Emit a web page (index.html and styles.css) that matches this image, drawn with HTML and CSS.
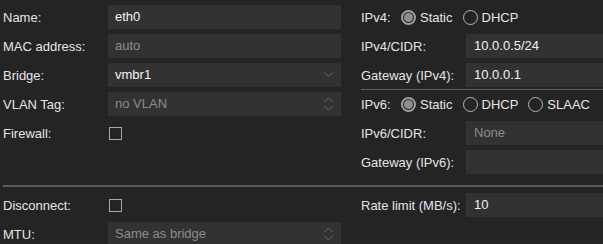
FILE: index.html
```html
<!DOCTYPE html>
<html lang="en">
<head>
    <meta charset="UTF-8">
    <meta name="viewport" content="width=device-width, initial-scale=1.0">
    <title>Network Device</title>
    <link rel="stylesheet" href="styles.css">
</head>
<body>
    <div class="panel">
        <div class="columns">
            <div class="col">
                <div class="row">
                    <div class="label">Name:</div>
                    <div class="field">eth0</div>
                </div>
                <div class="row">
                    <div class="label">MAC address:</div>
                    <div class="field empty">auto</div>
                </div>
                <div class="row">
                    <div class="label">Bridge:</div>
                    <div class="field combo">vmbr1
                        <svg class="trigger" width="9" height="6" viewBox="0 0 9 6"><path d="M0.5 0.5 L4.5 4.5 L8.5 0.5" fill="none" stroke="#6a6a6a" stroke-width="1"/></svg>
                    </div>
                </div>
                <div class="row">
                    <div class="label">VLAN Tag:</div>
                    <div class="field combo empty">no VLAN
                        <svg class="trigger" width="9" height="14" viewBox="0 0 9 14"><path d="M0.5 5 L4.5 1 L8.5 5 M0.5 9 L4.5 13 L8.5 9" fill="none" stroke="#6a6a6a" stroke-width="1"/></svg>
                    </div>
                </div>
                <div class="row">
                    <div class="label">Firewall:</div>
                    <div class="checkbox"></div>
                </div>
            </div>
            <div class="col col-right">
                <div class="row">
                    <div class="label short">IPv4:</div>
                    <div class="radio-item"><span class="radio checked"></span>Static</div>
                    <div class="radio-item"><span class="radio"></span>DHCP</div>
                </div>
                <div class="row">
                    <div class="label">IPv4/CIDR:</div>
                    <div class="field wide">10.0.0.5/24</div>
                </div>
                <div class="row">
                    <div class="label">Gateway (IPv4):</div>
                    <div class="field wide">10.0.0.1</div>
                </div>
                <div class="sep"></div>
                <div class="row">
                    <div class="label short">IPv6:</div>
                    <div class="radio-item"><span class="radio checked"></span>Static</div>
                    <div class="radio-item"><span class="radio"></span>DHCP</div>
                    <div class="radio-item"><span class="radio"></span>SLAAC</div>
                </div>
                <div class="row">
                    <div class="label">IPv6/CIDR:</div>
                    <div class="field wide empty">None</div>
                </div>
                <div class="row">
                    <div class="label">Gateway (IPv6):</div>
                    <div class="field wide"></div>
                </div>
            </div>
        </div>
        <div class="divider"></div>
        <div class="columns">
            <div class="col">
                <div class="row">
                    <div class="label">Disconnect:</div>
                    <div class="checkbox"></div>
                </div>
                <div class="row">
                    <div class="label">MTU:</div>
                    <div class="field combo empty">Same as bridge
                        <svg class="trigger" width="9" height="14" viewBox="0 0 9 14"><path d="M0.5 5 L4.5 1 L8.5 5 M0.5 9 L4.5 13 L8.5 9" fill="none" stroke="#6a6a6a" stroke-width="1"/></svg>
                    </div>
                </div>
            </div>
            <div class="col col-right">
                <div class="row">
                    <div class="label">Rate limit (MB/s):</div>
                    <div class="field wide">10</div>
                </div>
            </div>
        </div>
    </div>
</body>
</html>
```

FILE: styles.css
```css
*{
    margin: 0;
    padding: 0;
    box-sizing: border-box;
}
body{
    background: #242424;
    color: #e4e4e4;
    font-family: "Liberation Sans", Arial, sans-serif;
    font-size: 13px;
    overflow: hidden;
    width: 603px;
    height: 244px;
}
.panel{
    padding: 5px 0 0 3px;
    width: 603px;
    height: 244px;
    overflow: hidden;
}
.columns{
    display: flex;
    gap: 20px;
}
.col{
    width: 338px;
    flex-shrink: 0;
}
.col-right{
    width: 242px;
}
.row{
    display: flex;
    align-items: center;
    height: 24px;
    margin-bottom: 5px;
}
.label{
    width: 105px;
    flex-shrink: 0;
    white-space: nowrap;
}
.label.short{
    width: 40px;
}
.field{
    width: 233px;
    height: 24px;
    background: #323232;
    color: #f2f2f2;
    padding-left: 7px;
    line-height: 24px;
    position: relative;
}
.field.wide{
    width: 137px;
    padding-left: 8px;
}
.field.empty{
    color: #8c8c8c;
}
.trigger{
    position: absolute;
    right: 8px;
    top: 50%;
    transform: translateY(-50%);
}
.checkbox{
    width: 13px;
    height: 13px;
    margin-left: 1px;
    border: 1px solid #a8a8a8;
}
.radio-item{
    display: flex;
    align-items: center;
    margin-right: 10px;
    white-space: nowrap;
}
.radio-item:last-child{
    margin-right: 0;
}
.radio{
    width: 15px;
    height: 15px;
    border-radius: 50%;
    border: 1px solid #b4b4b4;
    margin-right: 4px;
    position: relative;
    flex-shrink: 0;
}
.radio.checked{
    border: 2px solid #a0a0a0;
}
.radio.checked::after{
    content: "";
    position: absolute;
    left: 1px;
    top: 1px;
    width: 9px;
    height: 9px;
    border-radius: 50%;
    background: #8e8e8e;
}
.sep{
    height: 1px;
    background: #5e5e5e;
    margin: -3px 0 2px 0;
}
.divider{
    height: 2px;
    background: #5a5a5a;
    margin: 6px 0 6px 0;
}
```
